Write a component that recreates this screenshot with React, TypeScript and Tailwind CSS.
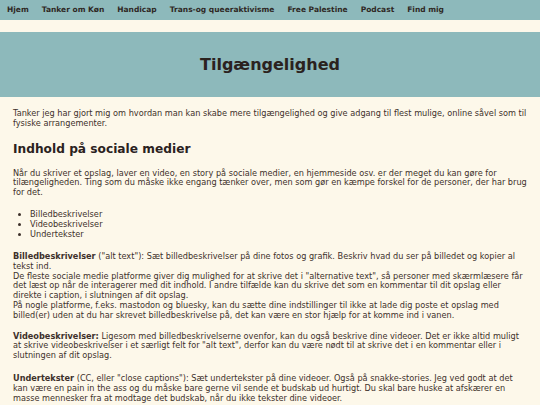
import React from 'react';

const NAV = ['Hjem', 'Tanker om Køn', 'Handicap', 'Trans-og queeraktivisme', 'Free Palestine', 'Podcast', 'Find mig'];

export default function App() {
  return (
    <div className="min-h-[405px] bg-[#fdf8ea] text-[#3d312b]" style={{ fontFamily: '"DejaVu Sans", Verdana, sans-serif' }}>
      <nav className="h-5 bg-[#8db9bb] flex items-center gap-[13px] px-[7px]">
        {NAV.map((n) => (
          <a key={n} className="text-[7.5px] font-bold text-[#2f2824]">
            {n}
          </a>
        ))}
      </nav>

      <header className="mt-[12px] h-[65px] bg-[#8db9bb] grid place-items-center">
        <h1 className="text-[16px] font-bold text-[#2b221e]">Tilgængelighed</h1>
      </header>

      <main className="px-[13px] pt-[12px] text-[8.18px] leading-[9.8px]">
        <p>
          Tanker jeg har gjort mig om hvordan man kan skabe mere tilgængelighed og give adgang til flest mulige, online såvel som til fysiske arrangementer.
        </p>

        <h2 className="mt-[12px] mb-[12px] text-[12.2px] leading-[16px] font-bold text-[#2b221e]">Indhold på sociale medier</h2>

        <p>
          Når du skriver et opslag, laver en video, en story på sociale medier, en hjemmeside osv. er der meget du kan gøre for tilængeligheden. Ting som du måske ikke engang tænker over, men som gør en kæmpe forskel for de personer, der har brug for det.
        </p>

        <ul className="mt-[11px] list-disc pl-[17px] leading-[10px]">
          <li>Billedbeskrivelser</li>
          <li>Videobeskrivelser</li>
          <li>Undertekster</li>
        </ul>

        <p className="mt-[13px]">
          <b>Billedbeskrivelser</b> ("alt text"): Sæt billedbeskrivelser på dine fotos og grafik. Beskriv hvad du ser på billedet og kopier al tekst ind.
          <br />
          De fleste sociale medie platforme giver dig mulighed for at skrive det i "alternative text", så personer med skærmlæsere får det læst op når de interagerer med dit indhold. I andre tilfælde kan du skrive det som en kommentar til dit opslag eller direkte i caption, i slutningen af dit opslag.
          <br />
          På nogle platforme, f.eks. mastodon og bluesky, kan du sætte dine indstillinger til ikke at lade dig poste et opslag med billed(er) uden at du har skrevet billedbeskrivelse på, det kan være en stor hjælp for at komme ind i vanen.
        </p>

        <p className="mt-[11px]">
          <b>Videobeskrivelser:</b> Ligesom med billedbeskrivelserne ovenfor, kan du også beskrive dine videoer. Det er ikke altid muligt at skrive videobeskrivelser i et særligt felt for "alt text", derfor kan du være nødt til at skrive det i en kommentar eller i slutningen af dit opslag.
        </p>

        <p className="mt-[13px]">
          <b>Undertekster</b> (CC, eller "close captions"): Sæt undertekster på dine videoer. Også på snakke-stories. Jeg ved godt at det kan være en pain in the ass og du måske bare gerne vil sende et budskab ud hurtigt. Du skal bare huske at afskærer en masse mennesker fra at modtage det budskab, når du ikke tekster dine videoer.
        </p>
      </main>
    </div>
  );
}
